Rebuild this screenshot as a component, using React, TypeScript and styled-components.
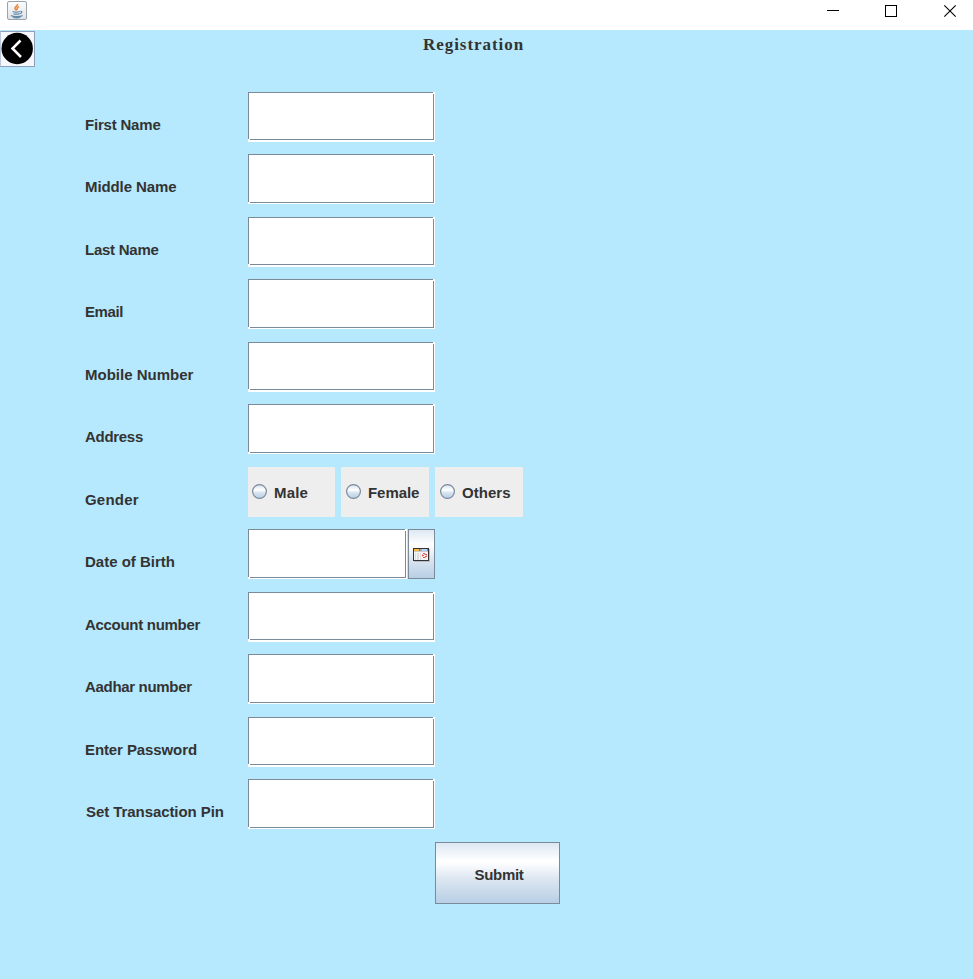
import React from "react";
import styled, { createGlobalStyle } from "styled-components";

const GlobalStyle = createGlobalStyle`
  html, body { margin: 0; padding: 0; background: #b6e9fd; }
  * { box-sizing: border-box; }
`;

const Window = styled.div`
  width: 973px;
  height: 979px;
  overflow: hidden;
  background: #b6e9fd;
  color: #333;
  font: bold 15px/18px "Liberation Sans", Arial, sans-serif;
`;

const TitleBar = styled.header`
  display: flex;
  align-items: flex-start;
  justify-content: space-between;
  height: 30px;
  background: #fff;
  padding: 1px 16px 0 7px;
  svg { display: block; }
`;

const Controls = styled.div`
  display: flex;
  gap: 45px;
  padding-top: 3px;
`;

const Heading = styled.div`
  display: flex;
  height: 62px;
  padding-top: 1px;
`;

const BackButton = styled.button`
  width: 35px;
  height: 36px;
  padding: 0;
  background: #f5f7fb;
  border: 1px solid #8f9fba;
  border-left-color: #b9c6d8;
  svg { display: block; }
`;

const Title = styled.h1`
  margin: 4px 0 0 388px;
  font: bold 17px/20px "Liberation Serif", "Times New Roman", serif;
  letter-spacing: 0.95px;
`;

const Form = styled.form`
  display: grid;
  grid-template-columns: 163px auto;
  grid-template-rows: repeat(6, 62px 63px);
  padding-left: 85px;
`;

const Label = styled.label<{ $spacing?: number; $indent?: number }>`
  padding: 24px 0 0 ${(p) => p.$indent ?? 0}px;
  letter-spacing: ${(p) => p.$spacing ?? 0}px;
  white-space: nowrap;
`;

const Cell = styled.div`
  display: flex;
  align-items: flex-start;
`;

/* Etched frame: the border is broken at the top-right and bottom-left corners. */
const Frame = styled.div<{ $width: number; $bottom: number }>`
  position: relative;
  width: ${(p) => p.$width}px;
  height: 50px;
  padding: 0 1px ${(p) => p.$bottom}px 0;
  background: #fff;
  &::before, &::after {
    content: "";
    position: absolute;
    background: #fff;
  }
  &::before { top: 0; right: 1px; width: 1px; height: 2px; }
  &::after { left: 0; bottom: ${(p) => p.$bottom}px; width: 2px; height: 1px; }
`;

const Input = styled.input`
  display: block;
  width: 100%;
  height: 100%;
  padding: 0 6px;
  border: 1px solid #7a8a99;
  border-radius: 0;
  background: #fff;
  outline: none;
  font: inherit;
`;

const Options = styled(Cell)`
  gap: 6px;
`;

const Option = styled.label<{ $width: number; $inset: number; $spacing: number }>`
  display: flex;
  align-items: center;
  gap: 7px;
  width: ${(p) => p.$width}px;
  height: 50px;
  padding: 1px 0 0 ${(p) => p.$inset}px;
  background: #eee;
  letter-spacing: ${(p) => p.$spacing}px;
  svg { display: block; margin-top: -3px; }
`;

const MetalButton = styled.button`
  display: flex;
  align-items: center;
  justify-content: center;
  padding: 0;
  border: 1px solid #7a8a99;
  background: linear-gradient(#dde8f3 0%, #fff 30%, #fff 32%, #dce6f1 60%, #b8cfe5 100%);
  color: #333;
  font: inherit;
`;

const CalendarButton = styled(MetalButton)`
  width: 27px;
  height: 50px;
  margin-left: 1px;
  padding-top: 2px;
`;

const SubmitButton = styled(MetalButton)`
  width: 125px;
  height: 62px;
  margin-left: 435px;
  padding: 3px 0 0 3px;
  letter-spacing: -0.3px;
`;

const JavaIcon = () => (
  <svg width="20" height="20" viewBox="0 0 20 20" fill="none">
    <defs>
      <linearGradient id="tile" x1="0" y1="0" x2="0" y2="1">
        <stop offset="0" stopColor="#fdfdfd" />
        <stop offset="1" stopColor="#dde2e7" />
      </linearGradient>
    </defs>
    <rect x=".5" y=".5" width="19" height="18" rx="1.5" fill="url(#tile)" stroke="#98a4b0" />
    <path d="M10.500 3c.5 2-3 2.700-2.500 4.500.2.900 1 1.200 1 2M12 5.500c-2 1-2.500 2-1.500 3.500" stroke="#e9893e" strokeWidth="1.600" />
    <path d="M5.500 10.500c2 .8 5 .8 7.500 0M6.500 12.700c2 .7 4 .7 6 0M13.500 10.300c2.200-.4 1.700 2-.8 2.300M4 14.500c2 1.500 9.500 1.500 11.500 0M6 16.400c2 .5 5 .5 7.500 0" stroke="#6088a8" strokeWidth="1.200" />
  </svg>
);

const BackIcon = () => (
  <svg width="33" height="34" viewBox="0 0 33 34" fill="none">
    <circle cx="16.200" cy="16.500" r="15.700" fill="#000" />
    <path d="M19.500 8.500 11.500 16.500 20 25" stroke="#fff" strokeWidth="2.500" />
  </svg>
);

const RadioIcon = ({ id }: { id: string }) => (
  <svg width="15" height="15" viewBox="0 0 15 15">
    <defs>
      <linearGradient id={id} x1="0" y1="0" x2="0" y2="1">
        <stop offset="0" stopColor="#d5e2f0" />
        <stop offset=".4" stopColor="#fff" />
        <stop offset=".6" stopColor="#d5e2f0" />
        <stop offset="1" stopColor="#b8cfe5" />
      </linearGradient>
    </defs>
    <circle cx="7.500" cy="7.500" r="6.900" fill={`url(#${id})`} stroke="#7a8a99" strokeWidth="1.200" />
  </svg>
);

const CalendarIcon = () => (
  <svg width="17" height="14" viewBox="0 0 17 14" shapeRendering="crispEdges">
    <path d="M1 1h16v13H1z" fill="#b9bdc1" />
    <path d="M0 0h16v13H0z" fill="#333" />
    <path d="M1 1h14v11H1z" fill="#f4f4f4" />
    <path d="M1 1h5v2H1z" fill="#ffb83d" />
    <path d="M6 1h1v2H6z" fill="#777" />
    <path d="M7 1h2v2H7z" fill="#aaa" />
    <path d="M9 1h5v2H9z" fill="#b5d5ff" />
    <path d="M14 1h1v2h-1z" fill="#6c90bb" />
    <path d="M1 3h14v1H1z" fill="#ccc" />
    <path d="M2 5h1v7H2zM4 5h2v7H4zM7 5h1v7H7z" fill="#ddd" />
    <path d="M10 5h2v1h-2zM12 6h2v1h-2zM9 7h2v1H9zM12 8h2v1h-2zM10 9h2v1h-2z" fill="#e65455" />
    <path d="M9 6h1v1H9zM11 6h1v1h-1zM13 7h1v1h-1zM9 8h1v1H9zM12 9h1v1h-1z" fill="#f5a6a6" />
  </svg>
);

interface Field {
  label: string;
  kind?: "gender" | "date";
  spacing?: number;
  indent?: number;
}

const fields: Field[] = [
  { label: "First Name", spacing: -0.2 },
  { label: "Middle Name", spacing: -0.1 },
  { label: "Last Name", spacing: -0.25 },
  { label: "Email", spacing: -0.4 },
  { label: "Mobile Number" },
  { label: "Address", spacing: -0.3 },
  { label: "Gender", kind: "gender", spacing: 0.2 },
  { label: "Date of Birth", kind: "date" },
  { label: "Account number", spacing: -0.3 },
  { label: "Aadhar number", spacing: -0.32 },
  { label: "Enter Password", spacing: -0.1 },
  { label: "Set Transaction Pin", spacing: -0.07, indent: 1 },
];

const genders = [
  { name: "Male", width: 87, inset: 4, spacing: 0.2 },
  { name: "Female", width: 88, inset: 5, spacing: -0.05 },
  { name: "Others", width: 88, inset: 5, spacing: 0.05 },
];

const renderControl = (field: Field, index: number) => {
  if (field.kind === "gender") {
    return (
      <Options>
        {genders.map((g) => (
          <Option key={g.name} $width={g.width} $inset={g.inset} $spacing={g.spacing}>
            <RadioIcon id={`radio-${g.name}`} />
            {g.name}
          </Option>
        ))}
      </Options>
    );
  }
  const bottom = index % 2 === 0 ? 2 : 1;
  return (
    <Cell>
      <Frame $width={field.kind === "date" ? 159 : 187} $bottom={bottom}>
        <Input aria-label={field.label} />
      </Frame>
      {field.kind === "date" && (
        <CalendarButton type="button" aria-label="Choose date">
          <CalendarIcon />
        </CalendarButton>
      )}
    </Cell>
  );
};

export default function App() {
  return (
    <Window>
      <GlobalStyle />
      <TitleBar>
        <JavaIcon />
        <Controls>
          <svg width="14" height="14" shapeRendering="crispEdges">
            <path d="M2 6h12v1H2z" fill="#000" />
          </svg>
          <svg width="14" height="14" fill="none" shapeRendering="crispEdges">
            <path d="M1.500 1.500h11v11h-11z" stroke="#000" />
          </svg>
          <svg width="14" height="14" fill="none">
            <path d="m1.300 1.300 11.400 11.400M12.700 1.300 1.300 12.700" stroke="#000" strokeWidth="1.100" />
          </svg>
        </Controls>
      </TitleBar>
      <Heading>
        <BackButton aria-label="Back">
          <BackIcon />
        </BackButton>
        <Title>Registration</Title>
      </Heading>
      <Form>
        {fields.map((field, i) => (
          <React.Fragment key={field.label}>
            <Label $spacing={field.spacing} $indent={field.indent}>
              {field.label}
            </Label>
            {renderControl(field, i)}
          </React.Fragment>
        ))}
      </Form>
      <SubmitButton type="button">Submit</SubmitButton>
    </Window>
  );
}
